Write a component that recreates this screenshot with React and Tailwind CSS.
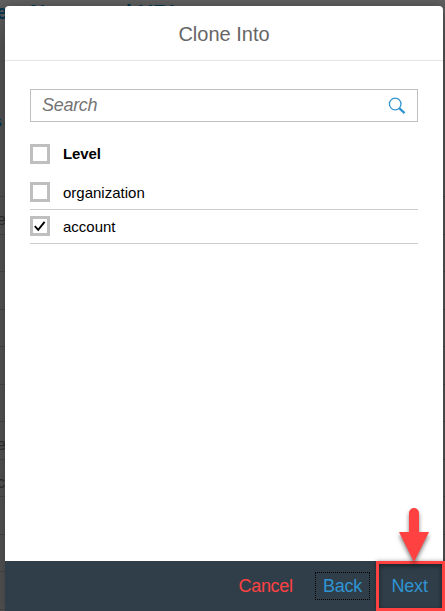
import React from "react";

function Checkbox({ checked }) {
  return (
    <span
      role="checkbox"
      aria-checked={checked}
      className="flex h-5 w-5 shrink-0 items-center justify-center border-[3px] border-[#bfbfbf] bg-white"
    >
      {checked && (
        <svg width="14" height="14" viewBox="0 0 14 14" fill="none">
          <path d="M1.8 7.2L5.2 10.8L11.6 2.8" stroke="#000" strokeWidth="1.9" />
        </svg>
      )}
    </span>
  );
}

const rows = ["e", "", "", "", "", "", "e", "c", "", "", "", ""];

function Backdrop() {
  return (
    <div className="flex h-full flex-col bg-gradient-to-b from-[#606060] to-[#505050] to-[8%]">
      <div className="flex h-[112px] shrink-0 items-start pt-px text-[21px] leading-[22px] font-bold whitespace-nowrap text-[#04344f]">
        <span className="-ml-[4px] w-[34px]">e</span>
        <span className="tracking-[0.2px]">Name and URL</span>
      </div>
      <div className="-ml-[7px] h-[84px] shrink-0 text-[16px] leading-5 font-bold text-[#04344f]">s</div>
      {rows.map((text, i) => (
        <div
          key={i}
          className="h-[37.5px] shrink-0 border-t border-dotted border-[#3a3a3a] pt-[13px] text-[16px] leading-5 text-[#2c2c2c]"
        >
          <span className="-ml-[3px]">{text}</span>
        </div>
      ))}
    </div>
  );
}

function SearchIcon() {
  return (
    <svg width="18" height="18" viewBox="0 0 18 18" fill="none" stroke="#2f94cf">
      <circle cx="7.2" cy="7" r="5.8" strokeWidth="1.3" />
      <path d="M11.2 11.2L16.6 16.2" strokeWidth="2.3" />
    </svg>
  );
}

export default function App() {
  return (
    <div className="relative h-[611px] w-[445px] overflow-hidden font-['Liberation_Sans',Arial,sans-serif]">
      <Backdrop />
      <div className="absolute top-[6px] left-[5px] flex h-[605px] w-[438px] flex-col rounded-t-[4px] bg-white shadow-[0_0_12px_rgba(0,0,0,0.25)]">
        <header className="flex h-[55px] items-center justify-center border-b border-[#e5e5e5] pt-[2px] text-[20px] text-[#666666]">
          Clone Into
        </header>
        <main className="flex flex-1 flex-col px-[25px] pt-7">
          <div className="flex h-[33px] w-[388px] items-center justify-between border border-[#bfbfbf] pr-[11px] pl-[11px]">
            <span className="text-[18px] tracking-[-0.3px] text-[#747474] italic">Search</span>
            <SearchIcon />
          </div>
          <div className="mt-[22px] flex h-5 items-center gap-[13px] text-[15px] font-bold text-black">
            <Checkbox checked={false} />
            <span className="tracking-[-0.1px]">Level</span>
          </div>
          <div className="mt-3 flex h-[34px] items-start gap-[13px] border-b border-[#cccccc] pt-[6px] text-[15px] leading-[22px] text-black">
            <Checkbox checked={false} />
            <span>organization</span>
          </div>
          <div className="flex h-[34px] items-start gap-[13px] border-b border-[#cccccc] pt-[6px] text-[15px] leading-[22px] text-black">
            <Checkbox checked />
            <span>account</span>
          </div>
        </main>
        <footer className="flex h-[50px] items-center bg-[#2f3e48] text-[18px] text-[#2f94d4]">
          <span className="ml-[233.5px] w-[56px] tracking-[-0.3px] text-[#ff4142]">Cancel</span>
          <span className="ml-[20.5px] flex h-[28px] w-[55px] items-center justify-center border border-dotted border-black tracking-[-0.2px]">
            Back
          </span>
          <span className="ml-[21.5px] tracking-[-0.2px]">Next</span>
        </footer>
      </div>
      <div className="absolute top-[561px] left-[376px] h-[50px] w-[69px] border-[3px] border-[#ff4142] shadow-[inset_0_2px_5px_rgba(0,0,0,0.45),0_0_4px_rgba(0,0,0,0.35)]" />
      <svg
        className="absolute top-[500px] left-[392px] drop-shadow-[0_3px_2px_rgba(0,0,0,0.5)]"
        width="44"
        height="66"
        viewBox="0 0 44 66"
      >
        <path d="M17 32V13A5 5 0 0 1 27 13V32H37L22 62L7 32Z" fill="#ff4142" />
      </svg>
    </div>
  );
}
